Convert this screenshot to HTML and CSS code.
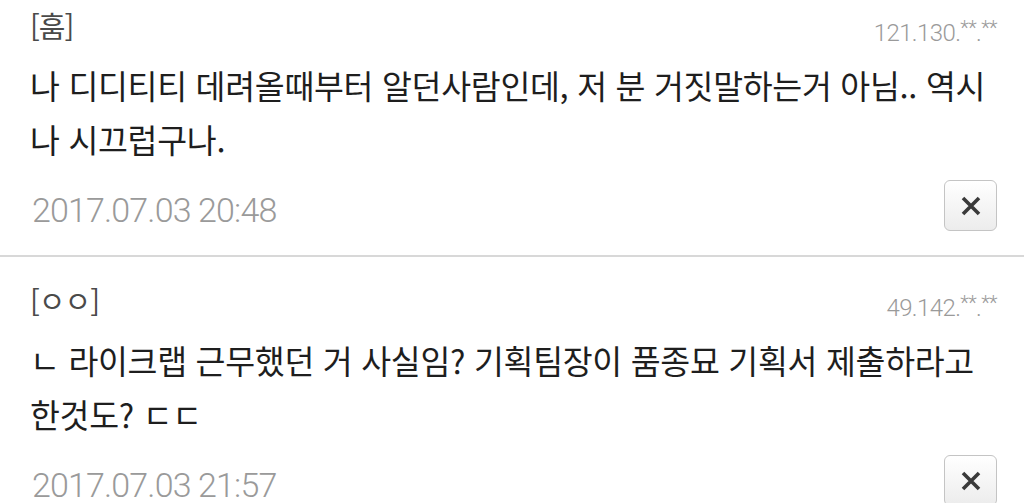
FILE: index.html
```html
<!DOCTYPE html>
<html lang="ko">

<head>
  <meta charset="UTF-8" />
  <meta name="viewport" content="width=device-width, initial-scale=1.0" />
  <title>댓글</title>
  <link rel="stylesheet" href="styles.css">
</head>

<body>
  <ul class="comments">
    <li class="comment">
      <div class="comment-head">
        <span class="nick">[훔]</span>
        <span class="ip">121.130.<span class="mask">**</span>.<span class="mask">**</span></span>
      </div>
      <p class="comment-body">나 디디티티 데려올때부터 알던사람인데, 저 분 거짓말하는거 아님.. 역시 나 시끄럽구나.</p>
      <div class="comment-foot">
        <span class="date">2017.07.03 20:48</span>
        <button class="delete" type="button" aria-label="삭제">
          <svg viewBox="0 0 24 24" width="24" height="24">
            <path d="M4 4 L20 20 M20 4 L4 20" />
          </svg>
        </button>
      </div>
    </li>
    <li class="comment">
      <div class="comment-head">
        <span class="nick">[ㅇㅇ]</span>
        <span class="ip">49.142.<span class="mask">**</span>.<span class="mask">**</span></span>
      </div>
      <p class="comment-body">ㄴ 라이크랩 근무했던 거 사실임? 기획팀장이 품종묘 기획서 제출하라고 한것도? ㄷㄷ</p>
      <div class="comment-foot">
        <span class="date">2017.07.03 21:57</span>
        <button class="delete" type="button" aria-label="삭제">
          <svg viewBox="0 0 24 24" width="24" height="24">
            <path d="M4 4 L20 20 M20 4 L4 20" />
          </svg>
        </button>
      </div>
    </li>
  </ul>
</body>

</html>
```

FILE: styles.css
```css
:root {
  --text-main: #1e1e1e;
  --text-nick: #4a4a4a;
  --text-meta: #9a9a9a;
  --divider: #d8d8d8;
}

* {
  box-sizing: border-box;
}

body {
  margin: 0;
  background: #fff;
  color: var(--text-main);
  font-family: "Noto Sans CJK KR", "Noto Sans", sans-serif;
  overflow: hidden;
}

.comments {
  list-style: none;
  padding: 0;
  /* list is scrolled a little past its top */
  margin: -18px 0 0;
}

.comment {
  padding: 21px 27px 24px 30px;
  border-bottom: 2px solid var(--divider);
}

.comment-head {
  display: flex;
  justify-content: space-between;
  align-items: flex-end;
  height: 42px;
}

.nick {
  font-size: 29px;
  line-height: 40px;
  letter-spacing: -1px;
  color: var(--text-nick);
}

.ip {
  font-family: Roboto, "Noto Sans", sans-serif;
  font-weight: 300;
  font-size: 24px;
  line-height: 24px;
  letter-spacing: -0.6px;
  color: var(--text-meta);
}

.ip .mask {
  font-size: 20px;
  vertical-align: 6px;
}

.comment-body {
  margin: 13px 0 0;
  padding-right: 3px;
  font-size: 32.5px;
  line-height: 54px;
  letter-spacing: -0.3px;
  word-break: keep-all;
}

.comment-foot {
  display: flex;
  justify-content: space-between;
  align-items: center;
  margin-top: 14px;
}

.date {
  padding: 8px 0 0 2px;
  font-family: Roboto, "Noto Sans", sans-serif;
  font-weight: 300;
  font-size: 34px;
  letter-spacing: -0.85px;
  color: var(--text-meta);
}

.delete {
  width: 53px;
  height: 51px;
  padding: 0;
  display: flex;
  align-items: center;
  justify-content: center;
  border: 1px solid #c4c4c4;
  border-radius: 6px;
  background: linear-gradient(#ffffff, #ececec);
  cursor: pointer;
}

.delete svg path {
  stroke: #3a3a3a;
  stroke-width: 3.6;
  fill: none;
}
```
